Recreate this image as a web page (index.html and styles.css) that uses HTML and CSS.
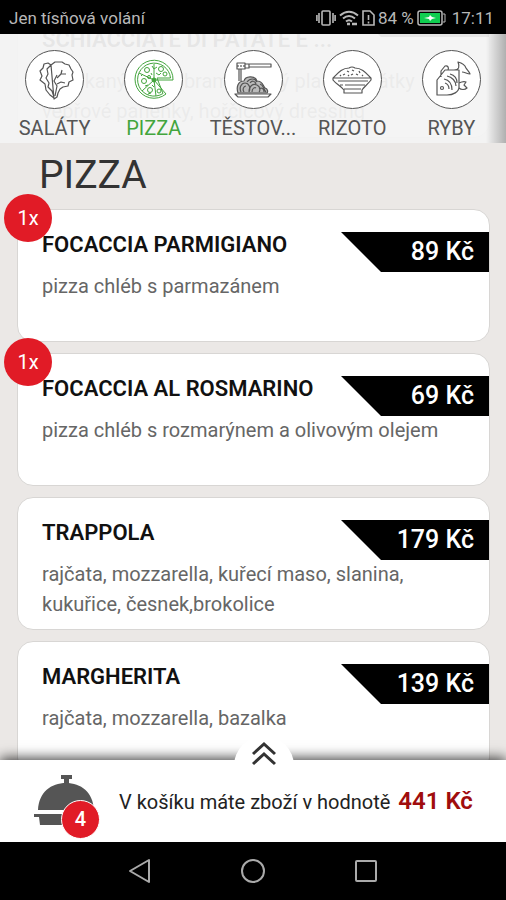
FILE: index.html
```html
<!DOCTYPE html>
<html lang="cs">
<head>
<meta charset="utf-8">
<meta name="viewport" content="width=device-width, initial-scale=1">
<title>Pizza</title>
<link rel="stylesheet" href="styles.css">
</head>
<body>
<div class="app">
  <div class="status">
    <span class="carrier">Jen tísňová volání</span>
    <svg class="status-icon" width="20" height="18" viewBox="0 0 20 18" fill="none" stroke="currentColor" stroke-width="1.6"><rect x="6" y="2" width="8" height="14" rx="1"/><path d="M3 4v10M17 4v10M.9 6v6M19.1 6v6"/></svg>
    <svg class="status-icon" width="20" height="18" viewBox="0 0 20 18" fill="none" stroke="currentColor" stroke-width="2"><path d="M1 6.500Q10-1 19 6.500M4 9.500Q10 4.500 16 9.500M7 12.500Q10 10 13 12.500"/><path d="M8 15h3M13 15h5" stroke-width="2.500"/></svg>
    <svg class="status-icon" width="13" height="18" viewBox="0 0 13 18" fill="none" stroke="currentColor" stroke-width="1.600"><path d="M1 2h7l4 4v10H1zM6.500 6v5M6.500 12.500v2"/></svg>
    <span class="percent">84 %</span>
    <svg class="battery" width="29" height="16" viewBox="0 0 29 16"><rect x="1" y="1" width="24" height="14" rx="2" fill="none" stroke="currentColor" stroke-width="1.500"/><path d="M26 4h2v8h-2" fill="none" stroke="currentColor"/><path d="M3 3h20v10H3z" fill="#0fce50"/><path d="M7 8l5-1 1-2 2 2 4 1-4 1-2 2-1-2z" fill="#fff"/></svg>
    <span class="clock">17:11</span>
  </div>

  <main class="screen">
    <nav class="tabs" aria-label="Kategorie">
      <a class="tab" href="#salaty"><span class="disc"><svg width="44" height="44" viewBox="0 0 44 44"><path d="M21 40l-4-3-4-5-1-6-5-4 2-4-2-5 3-3 1-4 4-1 3 2M18 7l4-3h7l3 2 4 1 2 4 2 3-1 3 1 5-4 2-1 4-5 1-3 2-2 4-1 4-3 2zM18 7l-4 4 1 5-2 4 3 5-1 4 4 4 2 6M22 38l2-10-3-5 3-6M24 20l4-4 5 0M28 16l1-4M24 26l4-2 4 1"/></svg></span><span class="tab-name">SALÁTY</span></a>
      <a class="tab active" href="#pizza" aria-current="page"><span class="disc"><svg width="44" height="44" viewBox="0 0 44 44"><path d="M22 22h19A19 19 0 1 0 34 36zM25 20h13.500A16.500 16.500 0 1 0 31 35.500z"/><path d="M22 22V6M22 22L7 15M22 22L10 33M22 22l2 16"/><g><circle cx="15" cy="12" r="2.500"/><circle cx="29" cy="11" r="2.500"/><circle cx="12" cy="23" r="2.500"/><circle cx="18" cy="32" r="2.500"/><circle cx="27" cy="33" r="2"/><circle cx="33" cy="16" r="2"/><circle cx="17" cy="19" r="1.500"/><path d="M20 8l2 3 3-2M24 15l3 2 2-2M9 18l2-2M13 28l3-1M20 27l2 2M16 36l3-1M19 15l1 2"/></g><circle cx="22" cy="22" r="2" fill="currentColor"/></svg></span><span class="tab-name">PIZZA</span></a>
      <a class="tab" href="#testoviny"><span class="disc"><svg width="44" height="44" viewBox="0 0 44 44"><path d="M6 5h8v6H6zM14 6h4v4h-4zM18 6h22v3H18M8 11v12M10 11v12M4 36h36l-3 3H7z"/><path class="pile" d="M7 35c-2-6 0-12 6-12 1-5 11-6 13 0 6 0 6 5 8 7 3 1 3 4 2 5z"/><path d="M10 34c-2-4 0-9 4-9s6 5 4 9M13 34c-2-3 0-6 2-6M18 34c0-6 4-9 8-7s3 6 2 7M21 34c0-4 3-5 4-4M16 24c3-4 8-4 10 0M19 25c2-3 5-2 6 1M29 26c4 1 3 5 6 8M28 31c3-2 5 0 5 3"/><path d="M7 7v2M10 7v2M13 7v2"/></svg></span><span class="tab-name">TĚSTOV...</span></a>
      <a class="tab" href="#rizoto"><span class="disc"><svg width="44" height="44" viewBox="0 0 44 44"><path d="M3 20C8 15 12 10 19 10q3-2 6 0c7 0 11 5 16 10M3 20h38v2c-4 5-7 7-9 10v3H14v-3C11 28 6 26 3 22zM8 23h30M15 27h20M10 27h3M14 31h17M14 35h18"/><path d="M13 17l2-1M17 13l2 1M21 17l2-1M22 12l2 1M26 16l2 1M29 13l1 2M32 17l1 1M18 17l1 1M10 18l1-1"/></svg></span><span class="tab-name">RIZOTO</span></a>
      <a class="tab" href="#ryby"><span class="disc"><svg width="44" height="44" viewBox="0 0 44 44"><path d="M8 37V22l8-10h14v17c0 5-6 8-12 8zM12 19l0-6 4-5c3-1 4 2 3 4M25 12c5 0 6-3 4-8 4 1 7 3 8 6 1 2 3 3 4 6-3 0-5-2-8-2M30 24v6c2 2 6 2 8 0l-3-3 2-3c-2-1-5 0-7 1"/><circle cx="13" cy="30" r="1.500"/><path d="M15 21c5 1 8 5 8 11M18 18c5 1 9 5 9 10M21 16c4 1 7 4 7 9M16 25c3 1 4 3 4 6"/></svg></span><span class="tab-name">RYBY</span></a>
    </nav>

    <div class="menu">
      <article class="card tall">
        <h2 class="name">SCHIACCIATE DI PATATE E ...</h2>
        <p class="desc">zapékaný tenký bramborový placek, plátky vepřové panenky, hořčicový dressing</p>
        <span class="price">189 Kč</span>
      </article>
      <h1 class="section">PIZZA</h1>
      <article class="card">
        <span class="count">1x</span>
        <h2 class="name">FOCACCIA PARMIGIANO</h2>
        <p class="desc">pizza chléb s parmazánem</p>
        <span class="price">89 Kč</span>
      </article>
      <article class="card">
        <span class="count">1x</span>
        <h2 class="name">FOCACCIA AL ROSMARINO</h2>
        <p class="desc">pizza chléb s rozmarýnem a olivovým olejem</p>
        <span class="price">69 Kč</span>
      </article>
      <article class="card">
        <h2 class="name">TRAPPOLA</h2>
        <p class="desc">rajčata, mozzarella, kuřecí maso, slanina, kukuřice, česnek,brokolice</p>
        <span class="price">179 Kč</span>
      </article>
      <article class="card">
        <h2 class="name">MARGHERITA</h2>
        <p class="desc">rajčata, mozzarella, bazalka</p>
        <span class="price">139 Kč</span>
      </article>
    </div>
  </main>

  <footer class="basket">
    <button class="expand" type="button" aria-label="Otevřít košík"><svg width="26" height="26" viewBox="0 0 26 26" fill="none" stroke="#333" stroke-width="3"><path d="M2 13L13 3l11 10M2 23l11-10 11 10"/></svg></button>
    <span class="cloche">
      <svg width="62" height="52" viewBox="0 0 62 52" fill="#555"><path d="M27 0h11v4h-3v5h-5V4h-3z"/><path d="M4 35C5 17 17 8 32 8s27 9 28 27zM0 39h62v3h-4l-2 8H6l-1-8H0z"/></svg>
      <span class="items">4</span>
    </span>
    <p class="total">V košíku máte zboží v hodnotě <strong class="sum">441 Kč</strong></p>
  </footer>

  <div class="system">
    <button class="key" type="button" aria-label="Zpět"><svg width="24" height="26" viewBox="0 0 24 26"><path d="M21 2v22L2 13z"/></svg></button>
    <button class="key" type="button" aria-label="Domů"><svg width="26" height="26" viewBox="0 0 26 26"><circle cx="13" cy="13" r="11"/></svg></button>
    <button class="key" type="button" aria-label="Poslední"><svg width="24" height="26" viewBox="0 0 24 26"><rect x="2" y="3" width="20" height="20" rx="1"/></svg></button>
  </div>
</div>
</body>
</html>
```
FILE: styles.css
```css
* { box-sizing: border-box; }
body {
  margin: 0;
  font-family: Roboto, "Liberation Sans", sans-serif;
  background: #ebe8e6;
}
h1, h2, p { margin: 0; }
button { border: 0; padding: 0; background: none; }
svg { display: block; }

.app {
  display: flex;
  flex-direction: column;
  height: 100vh;
}

.status {
  display: flex;
  align-items: center;
  gap: 3px;
  height: 34px;
  padding: 2px 12px 0 9px;
  background: #000;
  color: #b8b8b8;
  font-size: 17px;
}
.carrier { margin-right: auto; }
.clock { margin-left: 3px; }

.screen {
  position: relative;
  flex: 1;
  min-height: 0;
  overflow: hidden;
}

.tabs {
  position: absolute;
  inset: 0 0 auto 0;
  z-index: 2;
  display: flex;
  height: 109px;
  padding: 16px 5px 0;
  background:
    linear-gradient(to left, rgba(0, 0, 0, .28), rgba(0, 0, 0, 0) 20px),
    rgba(243, 243, 243, .94);
}
.tab {
  flex: 1;
  min-width: 0;
  display: flex;
  flex-direction: column;
  align-items: center;
  gap: 7px;
  color: #555;
  font-size: 20px;
  line-height: 24px;
  text-decoration: none;
}
.tab.active { color: #43a53d; }
.disc {
  display: grid;
  place-items: center;
  width: 59px;
  height: 59px;
  border: 1px solid #555;
  border-radius: 50%;
  background: #fff;
}
.disc svg {
  fill: none;
  stroke: currentColor;
  stroke-width: 1.2;
  stroke-linejoin: round;
}
.disc .pile { fill: #bbb; }
.tab.active svg { stroke-width: 1; }

.menu {
  display: flex;
  flex-direction: column;
  gap: 11px;
  margin-top: -60px;
  padding: 0 16px 0 17px;
}
.section {
  margin-left: 22px;
  padding-top: 3px;
  color: #333;
  font-size: 39px;
  font-weight: 400;
  line-height: 46px;
}
.card {
  position: relative;
  flex: none;
  min-height: 133px;
  padding: 23px 24px 8px;
  border: 1px solid #d8d6d4;
  border-radius: 16px;
  background: #fff;
}
.card.tall {
  min-height: 164px;
  padding-top: 53px;
}
.name {
  color: #111;
  font-size: 22px;
  font-weight: 600;
  line-height: 24px;
}
.desc {
  margin-top: 14px;
  color: #666;
  font-size: 20px;
  line-height: 30px;
}
.price {
  position: absolute;
  top: 22px;
  right: 0;
  width: 148px;
  padding-right: 15px;
  background: #000;
  clip-path: polygon(0 0, 100% 0, 100% 100%, 40px 100%);
  color: #fff;
  font-size: 25px;
  font-weight: 500;
  line-height: 40px;
  text-align: right;
}
.count {
  position: absolute;
  top: -16px;
  left: -14px;
  width: 48px;
  border-radius: 50%;
  background: #e11b26;
  color: #fff;
  font-size: 20px;
  line-height: 48px;
  text-align: center;
}

.basket {
  position: relative;
  z-index: 3;
  display: flex;
  align-items: center;
  gap: 23px;
  height: 82px;
  padding: 0 32px 0 34px;
  background: #fff;
  box-shadow: 0 -2px 12px rgba(0, 0, 0, .75);
}
.expand {
  position: absolute;
  top: -24px;
  left: 50%;
  display: grid;
  place-items: center;
  width: 60px;
  height: 36px;
  margin-left: -19px;
  border-radius: 30px 30px 0 0;
  background: #fff;
}
.cloche { position: relative; }
.items {
  position: absolute;
  right: -4px;
  bottom: -12px;
  width: 39px;
  border: 1px solid #fff;
  border-radius: 50%;
  background: #e11b26;
  color: #fff;
  font-size: 20px;
  font-weight: 500;
  line-height: 37px;
  text-align: center;
}
.total {
  color: #222;
  font-size: 20px;
  line-height: 28px;
  white-space: nowrap;
}
.sum {
  margin-left: 3px;
  color: #a00d0d;
  font-size: 24px;
  font-weight: 600;
}

.system {
  display: flex;
  justify-content: center;
  gap: 88px;
  height: 58px;
  background: #000;
}
.key svg {
  fill: none;
  stroke: #aaa;
  stroke-width: 2;
  stroke-linejoin: round;
}
```
